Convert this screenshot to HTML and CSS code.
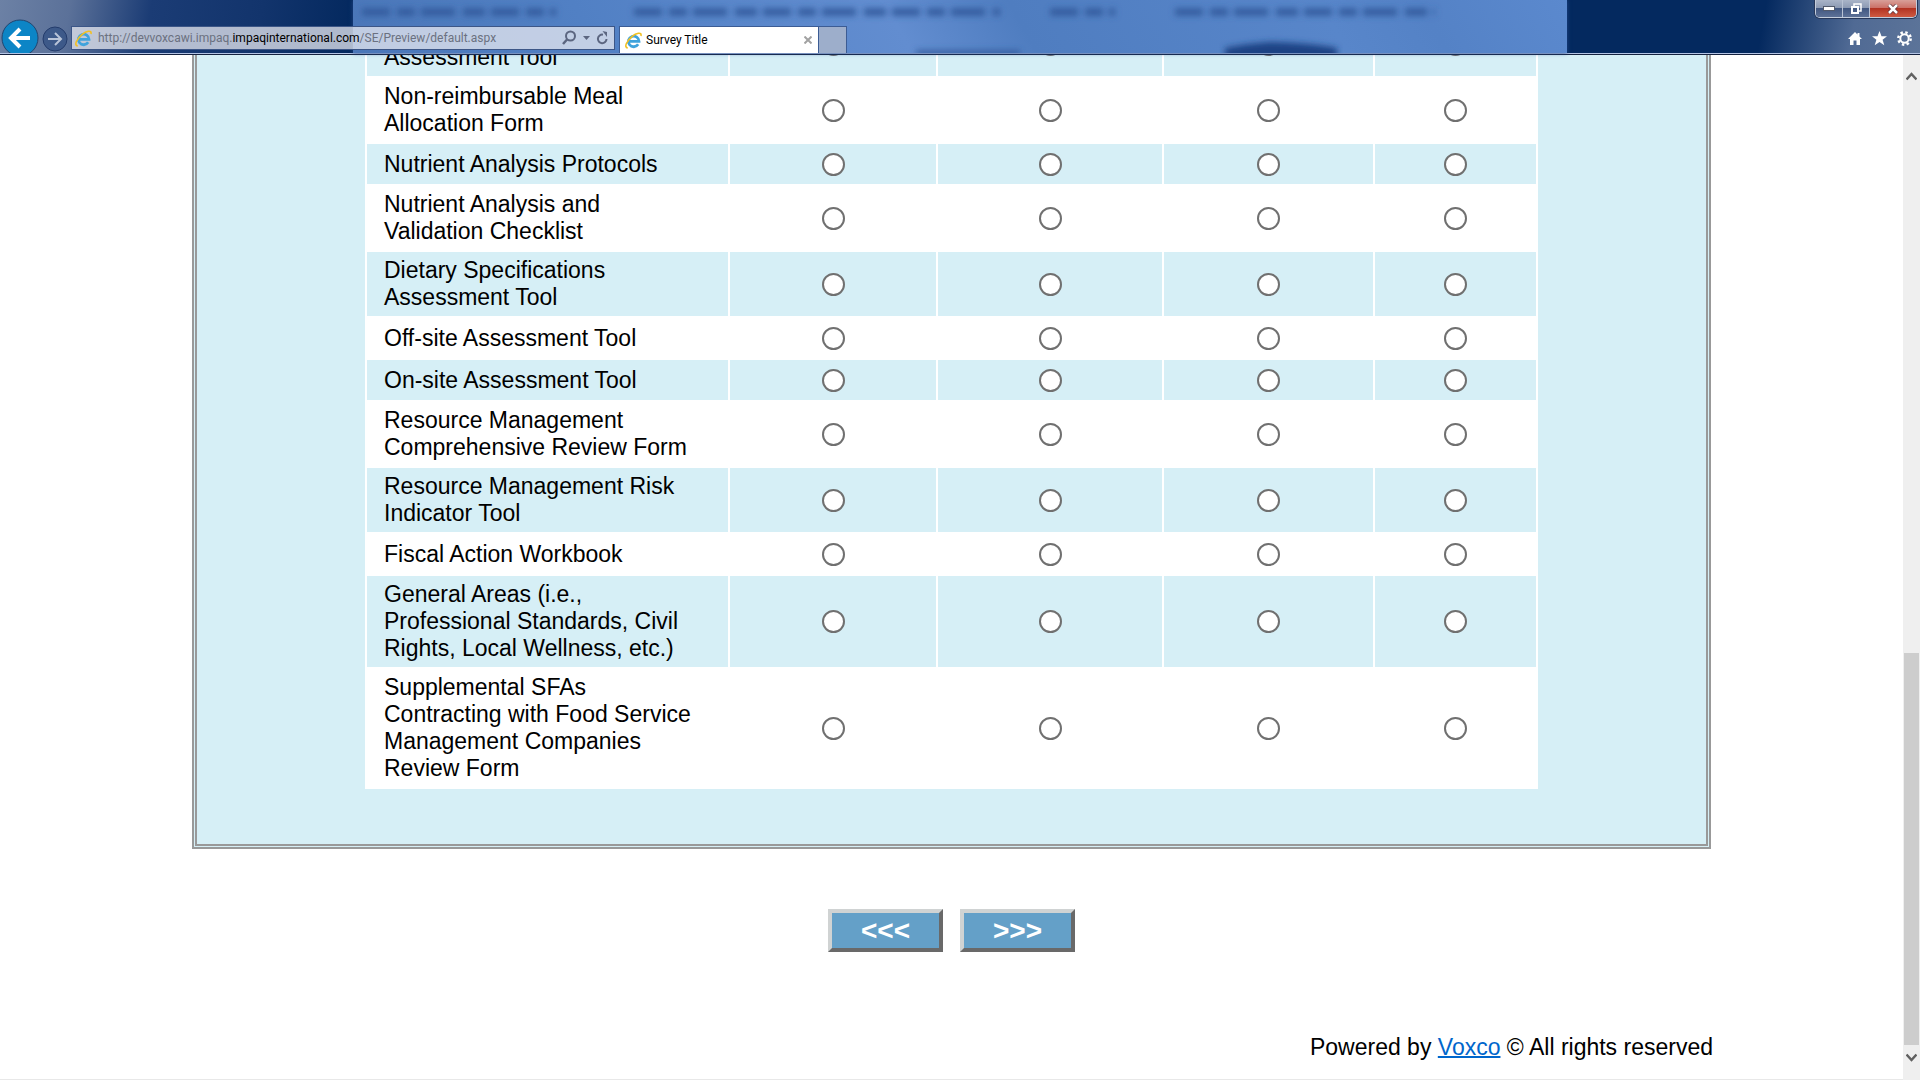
FILE: index.html
```html
<!DOCTYPE html>
<html lang="en">

<head>
    <meta charset="UTF-8">
    <meta name="viewport" content="width=device-width, initial-scale=1.0">
    <title>Survey Title</title>
    <link rel="stylesheet" href="styles.css">
</head>

<body>
    <header class="chrome">
        <div class="glass"></div>
        <svg class="blur-text" aria-hidden="true">
            <filter id="soft" x="-5%" y="-200%" width="110%" height="500%"><feGaussianBlur stdDeviation="3"/></filter>
            <g filter="url(#soft)" fill="none" stroke="#315a9c" stroke-width="7" stroke-dasharray="28 7 18 6 34 8 22 6">
                <path d="M362 12H556M634 12H1000M1050 12H1115M1175 12H1435"/>
                <path d="M916 53H1020" stroke-dasharray="none" stroke-width="5"/>
            </g>
            <path d="M1225 60V48Q1245 44 1270 42Q1310 43 1337 48V60Z" fill="#1b4384" filter="url(#soft)"/>
            <path d="M572 52H620M828 52H850" stroke="#2c5498" stroke-width="8" filter="url(#soft)"/>
        </svg>

        <nav class="toolbar">
            <button type="button" class="back" aria-label="Back">
                <svg viewBox="0 0 40 40"><circle cx="20" cy="20" r="18" fill="#0c85c6" stroke="#23456f" stroke-width="1"/><path d="M30 20H13M20 11L11 20L20 29" fill="none" stroke="#fff" stroke-width="4"/></svg>
            </button>
            <button type="button" class="forward" aria-label="Forward">
                <svg viewBox="0 0 26 26"><circle cx="13" cy="13" r="12" fill="#3d5989" stroke="#243c6c" stroke-width="1"/><path d="M6 13H18M13 7L19 13L13 19" fill="none" stroke="#b9c4d8" stroke-width="2"/></svg>
            </button>
            <div class="address">
                <svg class="ie" viewBox="0 0 16 16"><path d="M4 8.800H13.200A5 5 0 1 0 12.400 11.600" fill="none" stroke="#3fa3dc" stroke-width="2.600"/><path d="M2.600 15C-1.500 14.500 2 8 6.500 4.300C10.500 1 16 -.500 15 3.800" fill="none" stroke="#f2c021" stroke-width="1.500"/></svg>
                <span class="url">http://devvoxcawi.impaq.<b>impaqinternational.com</b>/SE/Preview/default.aspx</span>
                <button type="button" class="icon" aria-label="Search"><svg width="28" height="16" viewBox="0 0 28 16"><circle cx="8.500" cy="6" r="4.500" fill="none" stroke="#5c6680" stroke-width="2"/><path d="M5.500 9L1 14" stroke="#5c6680" stroke-width="2.500"/><path d="M21 6H28L24.500 10Z" fill="#5c6680"/></svg></button>
                <button type="button" class="icon" aria-label="Refresh"><svg width="13" height="14" viewBox="0 0 13 14"><path d="M10.500 8A4.300 4.300 0 1 1 7 3.700" fill="none" stroke="#5c6680" stroke-width="2"/><path d="M6.500 0L11 1V6Z" fill="#5c6680"/></svg></button>
            </div>
            <div class="tab">
                <svg class="ie" viewBox="0 0 16 16"><path d="M4 8.800H13.200A5 5 0 1 0 12.400 11.600" fill="none" stroke="#3fa3dc" stroke-width="2.600"/><path d="M2.600 15C-1.500 14.500 2 8 6.500 4.300C10.500 1 16 -.500 15 3.800" fill="none" stroke="#f2c021" stroke-width="1.500"/></svg>
                <span>Survey Title</span>
                <button type="button" class="icon" aria-label="Close tab"><svg width="8" height="8" viewBox="0 0 8 8"><path d="M0.500 0.500L7.500 7.500M7.500 0.500L0.500 7.500" stroke="#a2a2a2" stroke-width="2"/></svg></button>
            </div>
            <button type="button" class="new-tab" aria-label="New tab"></button>
            <div class="tools">
                <button type="button" class="icon" aria-label="Home"><svg width="14" height="15" viewBox="0 0 14 15"><path d="M7 1L0 8H2V14H5.500V9.500H8.500V14H12V8H14L11.500 5.500V2H9.500V3.500Z" fill="#fff"/></svg></button>
                <button type="button" class="icon" aria-label="Favorites"><svg width="15" height="15" viewBox="0 0 15 15"><path d="M7.500 0L9.500 5.300H15L10.600 8.700L12.300 14.300L7.500 11L2.700 14.300L4.400 8.700L0 5.300H5.500Z" fill="#fff"/></svg></button>
                <button type="button" class="icon" aria-label="Tools"><svg width="15" height="15" viewBox="0 0 15 15"><circle cx="7.500" cy="7.500" r="4.200" fill="none" stroke="#fff" stroke-width="2"/><circle cx="7.500" cy="7.500" r="6.200" fill="none" stroke="#fff" stroke-width="2.400" stroke-dasharray="2.435 2.435"/></svg></button>
            </div>
        </nav>

        <div class="window-buttons">
            <button type="button" aria-label="Minimize"><svg width="12" height="5" viewBox="0 0 12 5"><rect x=".5" y=".5" width="11" height="4" fill="#fff" stroke="#525a6c"/></svg></button>
            <button type="button" aria-label="Restore"><svg width="12" height="12" viewBox="0 0 12 12"><path d="M4 3V1H11V8H9" fill="none" stroke="#fff" stroke-width="1.500"/><rect x="2" y="4" width="6" height="6" fill="none" stroke="#fff" stroke-width="2"/></svg></button>
            <button type="button" class="close" aria-label="Close"><svg width="12" height="10" viewBox="0 0 12 10"><path d="M2 1L10 9M10 1L2 9" stroke="#5a3038" stroke-width="4"/><path d="M2 1L10 9M10 1L2 9" stroke="#fff" stroke-width="2.500"/></svg></button>
        </div>
    </header>

    <div class="viewport">
        <main class="page">
            <form>
                <div class="panel">
                    <table class="grid">
                        <colgroup>
                            <col class="col-name">
                            <col class="col-a">
                            <col class="col-b">
                            <col class="col-c">
                            <col class="col-d">
                        </colgroup>
                        <tbody id="rows"></tbody>
                    </table>
                </div>
                <div class="nav-buttons">
                    <button type="button">&lt;&lt;&lt;</button>
                    <button type="button">&gt;&gt;&gt;</button>
                </div>
            </form>
            <footer>Powered by <a href="#">Voxco</a> © All rights reserved</footer>
        </main>
        <div class="scrollbar">
            <svg class="arrow" viewBox="0 0 11 9"><path d="M0.500 7.500L5.500 2L10.500 7.500" fill="none" stroke="#606060" stroke-width="2.500"/></svg>
            <div class="track"><div class="thumb"></div></div>
            <svg class="arrow" viewBox="0 0 11 9"><path d="M0.500 1.500L5.500 7L10.500 1.500" fill="none" stroke="#606060" stroke-width="2.500"/></svg>
        </div>
    </div>

    <script>
        const tools = [
            'Assessment Tool',
            'Non-reimbursable Meal Allocation Form',
            'Nutrient Analysis Protocols',
            'Nutrient Analysis and Validation Checklist',
            'Dietary Specifications Assessment Tool',
            'Off-site Assessment Tool',
            'On-site Assessment Tool',
            'Resource Management Comprehensive Review Form',
            'Resource Management Risk Indicator Tool',
            'Fiscal Action Workbook',
            'General Areas (i.e., Professional Standards, Civil Rights, Local Wellness, etc.)',
            'Supplemental SFAs Contracting with Food Service Management Companies Review Form'
        ];

        const rows = document.getElementById('rows');
        tools.forEach((name, i) => {
            let html = `<th scope="row" id="tool${i}">${name}</th>`;
            for (let c = 1; c <= 4; c++) {
                html += `<td><input type="radio" name="q${i}" value="${c}" aria-labelledby="tool${i}"></td>`;
            }
            const tr = document.createElement('tr');
            tr.innerHTML = html;
            rows.appendChild(tr);
        });
    </script>
</body>

</html>
```
FILE: styles.css
```css
* {
    box-sizing: border-box;
}

body {
    display: flex;
    flex-direction: column;
    height: 100vh;
    margin: 0;
    overflow: hidden;
    font-family: "Liberation Sans", Arial, sans-serif;
    font-size: 23px;
    line-height: 27px;
    color: #000;
    background-color: #fff;
}

button {
    font-family: inherit;
    cursor: pointer;
}

/* Browser window frame */
.chrome {
    position: relative;
    flex: none;
    height: 55px;
    border-bottom: 1px solid #14213f;
    box-shadow: inset 0 -1px 0 #b4c4e4;
    background: linear-gradient(100deg, #6c81a5 0, #5b7199 70px, #1b3c75 150px, #12346c 260px, #04295f 350px, #04295f 1740px, #506a94 1830px, #5c7499 100%);
}

.glass {
    position: absolute;
    top: 0;
    bottom: 1px;
    left: 353px;
    width: 1214px;
    background: linear-gradient(60deg, #4a76b8 0, #5180c4 20%, #628dd0 45%, #4f7dc0 55%, #5886ca 80%, #5482c6 88%, #5b89ce 100%);
    box-shadow: 0 0 4px #23498a;
}

.blur-text {
    position: absolute;
    top: 0;
    left: 0;
    width: 100%;
    height: 53px;
}

.toolbar {
    position: relative;
    display: flex;
    align-items: flex-end;
    height: 53px;
    overflow: hidden;
}

.toolbar button {
    flex: none;
    padding: 0;
    border: none;
    background: none;
}

.back,
.forward {
    display: block;
}

.back svg {
    display: block;
    width: 40px;
    height: 40px;
}

.back {
    height: 35px;
}

.forward {
    height: 29px;
    margin: 0 3px 0 2px;
}

.forward svg {
    display: block;
    width: 26px;
    height: 26px;
}

.address {
    display: flex;
    align-items: center;
    gap: 6px;
    width: 544px;
    height: 24px;
    margin: 0 4px 3px 0;
    padding: 0 5px 0 3px;
    border: 1px solid #3c5687;
    background-color: rgba(232, 234, 240, 0.75);
    font-family: Roboto, "Noto Sans", sans-serif;
    font-size: 12px;
}

.ie {
    flex: none;
    width: 17px;
    height: 17px;
}

.url {
    flex: 1;
    color: #6b7180;
    white-space: nowrap;
}

.url b {
    font-weight: normal;
    color: #000;
}

.icon svg {
    display: block;
}

.tab {
    display: flex;
    align-items: center;
    gap: 4px;
    width: 200px;
    height: 27px;
    padding: 0 6px 0 5px;
    border: 1px solid #3c5c94;
    border-bottom: none;
    background-color: #fff;
    font-family: Roboto, "Noto Sans", sans-serif;
    font-size: 12px;
}

.tab span {
    flex: 1;
}

.toolbar .new-tab {
    width: 28px;
    height: 27px;
    border: 1px solid #3c5c94;
    border-left: none;
    border-bottom: none;
    background-color: #9daecb;
}

.tools {
    display: flex;
    gap: 10px;
    margin-left: auto;
    padding: 0 8px 7px 0;
}

.window-buttons {
    position: absolute;
    top: 0;
    right: 3px;
    display: flex;
    height: 18px;
    overflow: hidden;
    border: 1px solid #c4cddc;
    border-top: none;
    border-radius: 0 0 5px 5px;
    box-shadow: 0 0 0 1px #28385a;
}

.window-buttons button {
    display: flex;
    align-items: center;
    justify-content: center;
    width: 27px;
    padding: 0;
    border: none;
    border-right: 1px solid #b8c2d4;
    background: linear-gradient(#a9b4c8 0, #8d9bb4 45%, #3f557f 46%, #5d7197 100%);
}

.window-buttons .close {
    width: 46px;
    border-right: none;
    background: linear-gradient(#d8a099 0, #cc7268 45%, #b03020 46%, #cf5a42 100%);
}

/* Scrolled page: its end is in view */
.viewport {
    display: flex;
    flex: 1;
    min-height: 0;
}

.page {
    display: flex;
    flex: 1;
    flex-direction: column;
    justify-content: flex-end;
    min-width: 0;
    overflow: hidden;
    border-bottom: 1px solid #e8e8e8;
}

.panel {
    margin: 0 192px;
    padding: 0 168px 55px;
    border: 5px double #999;
    background-color: #d6eff6;
}

.grid {
    width: 100%;
    table-layout: fixed;
    border-spacing: 2px;
    background-color: #fff;
}

.col-name {
    width: 361px;
}

.col-a {
    width: 206px;
}

.col-b {
    width: 224px;
}

.col-c {
    width: 209px;
}

.col-d {
    width: 161px;
}

.grid th,
.grid td {
    height: 40px;
    padding: 5px 17px;
    vertical-align: middle;
}

.grid th {
    padding-right: 36px;
    font-weight: normal;
    text-align: left;
}

.grid td {
    padding: 0;
    text-align: center;
}

.grid tr:nth-child(odd) {
    background-color: #d6eff6;
}

.grid tr:nth-child(even) {
    background-color: #fff;
}

.grid tr:first-child th {
    height: 64px;
    vertical-align: bottom;
}

.grid input {
    display: block;
    width: 23px;
    height: 23px;
    margin: 0 auto;
    border: 2px solid #707070;
    border-radius: 50%;
    background-color: #fff;
    appearance: none;
}

.grid input:checked {
    background-color: #333;
    box-shadow: inset 0 0 0 4px #fff;
}

.nav-buttons {
    display: flex;
    justify-content: center;
    gap: 17px;
    padding: 60px 0 82px;
}

.nav-buttons button {
    width: 115px;
    height: 43px;
    padding: 0;
    border: 4px solid;
    border-color: #d0d3d3 #696969 #696969 #d0d3d3;
    color: #fff;
    background-color: #64a0c8;
    font-size: 28px;
    font-weight: bold;
    line-height: 28px;
}

footer {
    margin: 0 190px;
    padding-bottom: 18px;
    text-align: right;
}

footer a {
    color: #06c;
    text-decoration-thickness: 2px;
}

.scrollbar {
    display: flex;
    flex: none;
    flex-direction: column;
    align-items: center;
    width: 17px;
    padding: 17px 1px 18px;
    background-color: #efefef;
}

.arrow {
    flex: none;
    width: 11px;
    height: 9px;
}

.track {
    display: flex;
    flex: 1;
    flex-direction: column;
    justify-content: flex-end;
    width: 100%;
    padding: 8px 0;
}

.thumb {
    height: 41%;
    background-color: #cdcdcd;
}
```
